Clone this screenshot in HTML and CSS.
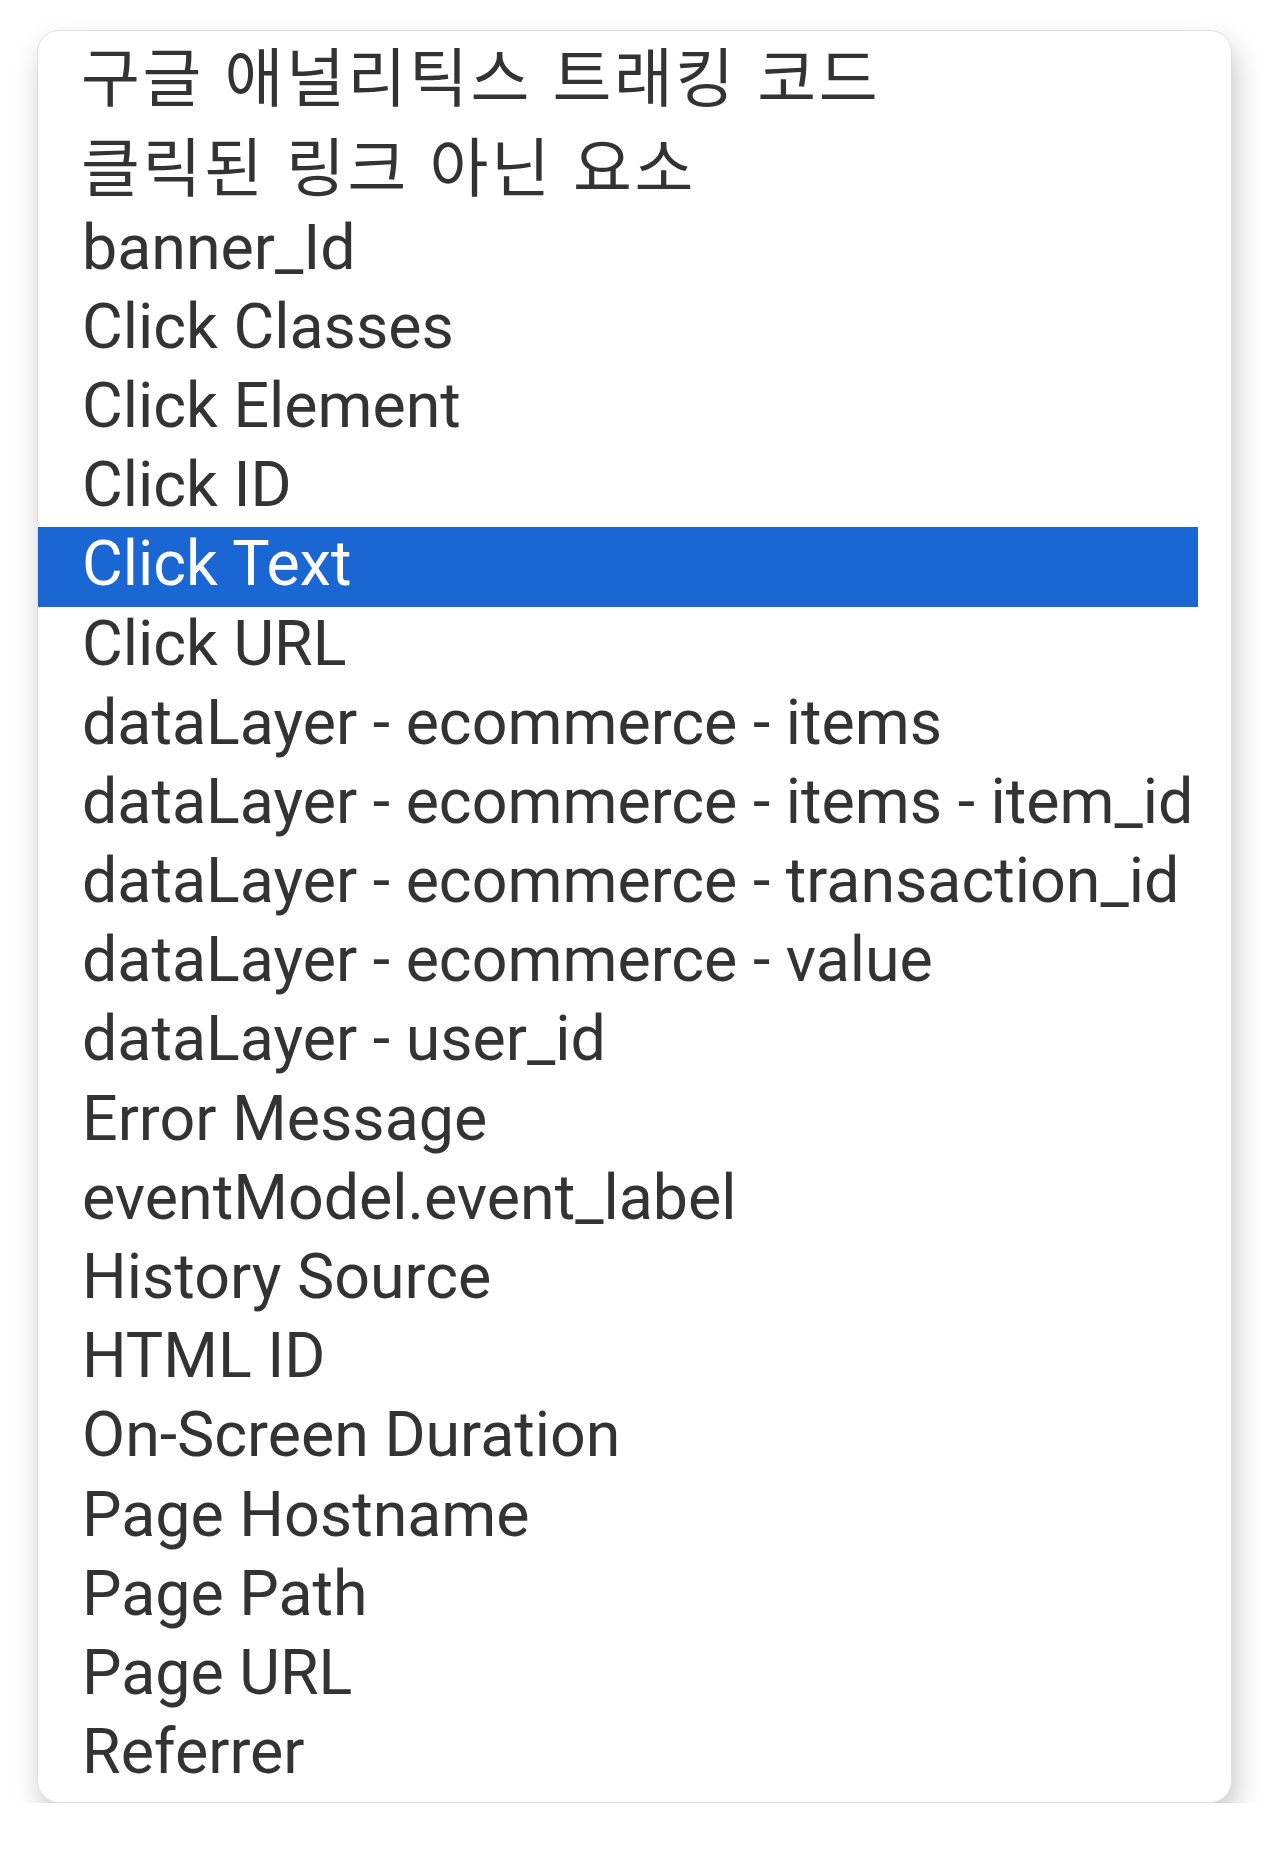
FILE: index.html
```html
<!DOCTYPE html>
<html lang="ko">
<head>
<meta charset="utf-8">
<link rel="stylesheet" href="styles.css">
</head>
<body>
<div class="card">
  <ul class="list">
    <li class="item ko">구글 애널리틱스 트래킹 코드</li>
    <li class="item ko">클릭된 링크 아닌 요소</li>
    <li class="item">banner_Id</li>
    <li class="item">Click Classes</li>
    <li class="item">Click Element</li>
    <li class="item">Click ID</li>
    <li class="item selected">Click Text</li>
    <li class="item">Click URL</li>
    <li class="item">dataLayer - ecommerce - items</li>
    <li class="item">dataLayer - ecommerce - items - item_id</li>
    <li class="item">dataLayer - ecommerce - transaction_id</li>
    <li class="item">dataLayer - ecommerce - value</li>
    <li class="item">dataLayer - user_id</li>
    <li class="item">Error Message</li>
    <li class="item">eventModel.event_label</li>
    <li class="item">History Source</li>
    <li class="item">HTML ID</li>
    <li class="item">On-Screen Duration</li>
    <li class="item">Page Hostname</li>
    <li class="item">Page Path</li>
    <li class="item">Page URL</li>
    <li class="item">Referrer</li>
  </ul>
</div>
</body>
</html>
```
FILE: styles.css
```css
html, body {
  margin: 0;
  padding: 0;
  background: #ffffff;
}
body {
  padding: 30px 0 0 37px;
  font-family: Roboto, "Noto Sans CJK KR", sans-serif;
}
.card {
  width: 1195px;
  height: 1773px;
  box-sizing: border-box;
  border: 1px solid #e0e0e0;
  border-radius: 22px;
  background: #fff;
  box-shadow: 4px 14px 28px rgba(0, 0, 0, 0.22);
}
.list {
  list-style: none;
  margin: 0;
  padding: 0;
  width: 1160px;
}
.item {
  box-sizing: border-box;
  height: 79.2px;
  line-height: 73px;
  padding-left: 44px;
  font-size: 62.7px;
  color: #333333;
  white-space: nowrap;
}
.item.ko {
  height: 89.8px;
  line-height: 84px;
  padding-left: 43px;
  font-family: "Noto Sans CJK KR", sans-serif;
  font-size: 64px;
  letter-spacing: 2.6px;
}
.item.selected {
  background: #1a66d2;
  color: #ffffff;
}
```
